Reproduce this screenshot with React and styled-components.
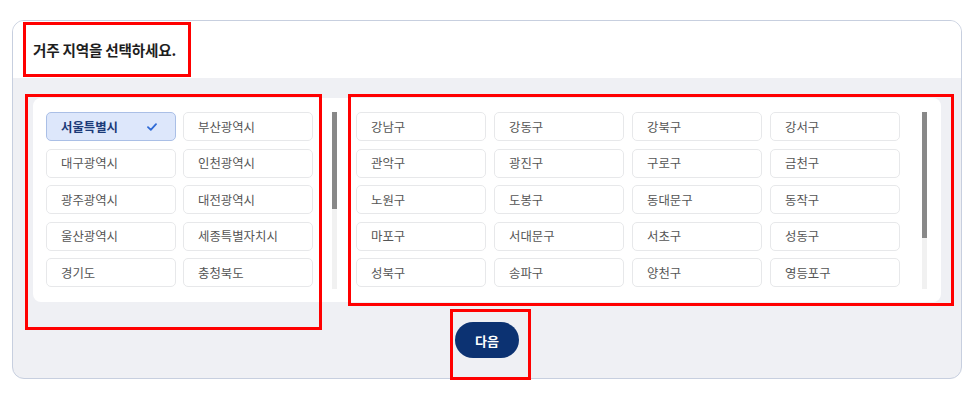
import React from 'react';
import styled, { createGlobalStyle } from 'styled-components';

const GlobalStyle = createGlobalStyle`
  html, body {
    margin: 0;
    padding: 0;
    background: #ffffff;
  }
  body {
    font-family: "Noto Sans CJK KR", "Noto Sans", sans-serif;
  }
  * {
    box-sizing: border-box;
  }
`;

const Page = styled.div`
  position: relative;
  width: 975px;
  height: 409px;
  padding: 20px 0 0 12px;
`;

const Card = styled.div`
  width: 950px;
  border: 1px solid #c7cfdf;
  border-radius: 12px;
  overflow: hidden;
  background: #eff0f4;
`;

const Header = styled.div`
  height: 57px;
  display: flex;
  align-items: center;
  padding-left: 20px;
  background: #ffffff;
`;

const Title = styled.h2`
  margin: 0;
  font-size: 14.6px;
  font-weight: 700;
  color: #1e1e1e;
  letter-spacing: -0.2px;
`;

const Body = styled.div`
  padding: 20px;
  display: flex;
  flex-direction: column;
  align-items: center;
  gap: 20px;
`;

const Panel = styled.div`
  align-self: stretch;
  display: flex;
  gap: 19px;
  padding: 14px 14px 13px 13px;
  background: #ffffff;
  border-radius: 8px;
`;

const ListBox = styled.div`
  width: ${p => (p.$grow ? 'auto' : `${p.$width}px`)};
  flex: ${p => (p.$grow ? '1' : 'none')};
  height: 177px;
  display: flex;
`;

const Viewport = styled.div`
  flex: 1;
  height: 100%;
  overflow: hidden;
`;

const Track = styled.div`
  width: 5px;
  height: 100%;
  background: #f1f1f1;
  flex: none;
`;

const Thumb = styled.div`
  width: 100%;
  height: ${p => p.$size}px;
  background: #888888;
`;

const Grid = styled.div`
  display: grid;
  grid-template-columns: repeat(${p => p.$cols}, 130px);
  column-gap: ${p => p.$gap}px;
  row-gap: 7.6px;
`;

const Option = styled.button`
  height: 29px;
  display: flex;
  align-items: center;
  justify-content: space-between;
  padding: 0 18px 0 14px;
  border: 1px solid ${p => (p.$selected ? '#aabfe6' : '#e7e8ea')};
  border-radius: 5px;
  background: ${p => (p.$selected ? '#dde7fb' : '#ffffff')};
  color: ${p => (p.$selected ? '#1b3a78' : '#555555')};
  font-family: inherit;
  font-size: 12.4px;
  font-weight: ${p => (p.$selected ? 700 : 400)};
  text-align: left;
  cursor: pointer;
  white-space: nowrap;
`;

const Check = styled.svg`
  width: 10px;
  height: 8px;
  flex: none;
`;

const NextButton = styled.button`
  width: 64px;
  height: 36px;
  border: none;
  border-radius: 18px;
  background: #0c3272;
  color: #ffffff;
  font-family: inherit;
  font-size: 13px;
  font-weight: 700;
  cursor: pointer;
`;

const Marker = styled.div`
  position: absolute;
  left: ${p => p.$x}px;
  top: ${p => p.$y}px;
  width: ${p => p.$w}px;
  height: ${p => p.$h}px;
  border: 3px solid #ff0000;
  pointer-events: none;
`;

const regions = [
  '서울특별시', '부산광역시', '대구광역시', '인천광역시', '광주광역시', '대전광역시',
  '울산광역시', '세종특별자치시', '경기도', '충청북도', '충청남도', '전북특별자치도',
  '전라남도', '경상북도', '경상남도', '강원특별자치도', '제주특별자치도',
];

const districts = [
  '강남구', '강동구', '강북구', '강서구', '관악구', '광진구', '구로구', '금천구',
  '노원구', '도봉구', '동대문구', '동작구', '마포구', '서대문구', '서초구', '성동구',
  '성북구', '송파구', '양천구', '영등포구', '용산구', '은평구', '종로구', '중구', '중랑구',
];

const VIEW = 177;
const ROW = 29;
const GAP = 7.6;

// thumb length follows the ratio of visible to total content height
const thumbSize = (count, cols) => {
  const rows = Math.ceil(count / cols);
  const total = rows * ROW + (rows - 1) * GAP;
  return Math.round((VIEW * VIEW) / total);
};

const App = () => {
  const selected = '서울특별시';

  return (
    <Page>
      <GlobalStyle />
      <Card>
        <Header>
          <Title>거주 지역을 선택하세요.</Title>
        </Header>
        <Body>
          <Panel>
            <ListBox $width={291}>
              <Viewport>
                <Grid $cols={2} $gap={7}>
                  {regions.map(name => (
                    <Option key={name} $selected={name === selected}>
                      {name}
                      {name === selected && (
                        <Check viewBox="0 0 10 8">
                          <path d="M1 4.2 L3.8 6.8 L9 1.2" fill="none" stroke="#2f6ad6" strokeWidth="1.8" strokeLinecap="round" strokeLinejoin="round" />
                        </Check>
                      )}
                    </Option>
                  ))}
                </Grid>
              </Viewport>
              <Track>
                <Thumb $size={thumbSize(regions.length, 2)} />
              </Track>
            </ListBox>
            <ListBox $grow>
              <Viewport>
                <Grid $cols={4} $gap={8}>
                  {districts.map(name => (
                    <Option key={name}>{name}</Option>
                  ))}
                </Grid>
              </Viewport>
              <Track>
                <Thumb $size={thumbSize(districts.length, 4)} />
              </Track>
            </ListBox>
          </Panel>
          <NextButton>다음</NextButton>
        </Body>
      </Card>

      <Marker $x={23} $y={22} $w={168} $h={55} />
      <Marker $x={25} $y={94} $w={297} $h={236} />
      <Marker $x={348} $y={94} $w={606} $h={212} />
      <Marker $x={450} $y={309} $w={81} $h={71} />
    </Page>
  );
};

export default App;
